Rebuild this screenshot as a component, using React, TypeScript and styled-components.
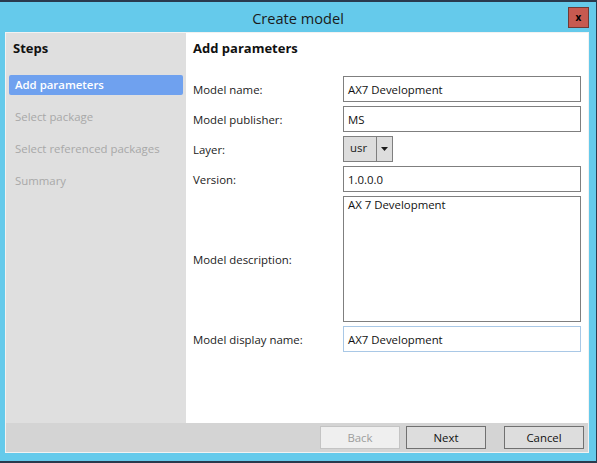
import React from 'react'
import styled, { createGlobalStyle } from 'styled-components'

const GlobalStyle = createGlobalStyle`
  html, body {
    margin: 0;
    padding: 0;
    background: #2a3a4e;
  }
  body {
    font-family: "Open Sans", "Noto Sans", "Liberation Sans", sans-serif;
    font-size: 11.4px;
    color: #1b1b1b;
  }
`

const steps = [
  { label: 'Add parameters', active: true },
  { label: 'Select package', active: false },
  { label: 'Select referenced packages', active: false },
  { label: 'Summary', active: false },
]

const App = () => {
  return (
    <>
      <GlobalStyle />
      <Window>
        <TitleBar>
          <Title>Create model</Title>
          <CloseButton>x</CloseButton>
        </TitleBar>
        <Frame>
          <Body>
            <Sidebar>
              <SideTitle>Steps</SideTitle>
              <StepList>
                {steps.map((s) => (
                  <StepRow key={s.label}>
                    <Step active={s.active}>{s.label}</Step>
                  </StepRow>
                ))}
              </StepList>
            </Sidebar>
            <Main>
              <Heading>Add parameters</Heading>
              <Form>
                <Label>Model name:</Label>
                <TextBox>AX7 Development</TextBox>

                <Label>Model publisher:</Label>
                <TextBox>MS</TextBox>

                <Label>Layer:</Label>
                <Select>
                  <SelectValue>usr</SelectValue>
                  <SelectArrow>
                    <svg width="7" height="4" viewBox="0 0 7 4">
                      <path d="M0 0 H7 L3.5 4 Z" fill="#1b1b1b" />
                    </svg>
                  </SelectArrow>
                </Select>

                <Label>Version:</Label>
                <TextBox>1.0.0.0</TextBox>

                <Label>Model description:</Label>
                <TextArea>AX 7 Development</TextArea>

                <Label>Model display name:</Label>
                <TextBox focused>AX7 Development</TextBox>
              </Form>
            </Main>
          </Body>
          <Footer>
            <Button disabled>Back</Button>
            <Button>Next</Button>
            <Button wide>Cancel</Button>
          </Footer>
        </Frame>
      </Window>
    </>
  )
}

export default App

const Window = styled.div`
  width: 596px;
  height: 459px;
  background: #65caeb;
  border-top: 2px solid #2a3a4e;
  border-right: 1px solid #2a3a4e;
  border-bottom: 2px solid #2a3a4e;
  display: flex;
  flex-direction: column;
`

const TitleBar = styled.div`
  height: 30px;
  position: relative;
  display: flex;
  justify-content: center;
  align-items: center;
`

const Title = styled.div`
  font-size: 14.6px;
  color: #1a1a1a;
  padding-top: 1px;
`

const CloseButton = styled.div`
  position: absolute;
  right: 7px;
  top: 5px;
  width: 21px;
  height: 21px;
  box-sizing: border-box;
  background: #c75a50;
  border: 1px solid #6e3a36;
  display: flex;
  justify-content: center;
  align-items: center;
  font-size: 10px;
  font-weight: 700;
  line-height: 1;
  color: #000;
  padding-bottom: 2px;
`

const Frame = styled.div`
  margin-left: 5px;
  width: 582px;
  height: 419px;
  border: 1px solid #f2f2f2;
  display: flex;
  flex-direction: column;
`

const Body = styled.div`
  flex: 1;
  display: flex;
`

const Sidebar = styled.div`
  width: 180px;
  background: #dfdfdf;
  display: flex;
  flex-direction: column;
`

const SideTitle = styled.div`
  height: 30px;
  padding-left: 7px;
  padding-top: 6px;
  font-size: 13px;
  font-weight: 700;
  color: #111;
`

const StepList = styled.div`
  display: flex;
  flex-direction: column;
`

const StepRow = styled.div`
  height: 32px;
  display: flex;
  align-items: center;
  padding: 0 3px;
`

const Step = styled.div<{ active: boolean }>`
  flex: 1;
  height: 20px;
  line-height: 20px;
  padding-left: 6px;
  border-radius: 2px;
  background: ${(p) => (p.active ? '#6fa1ef' : 'transparent')};
  color: ${(p) => (p.active ? '#ffffff' : '#a8a8a8')};
  font-weight: ${(p) => (p.active ? 600 : 400)};
`

const Main = styled.div`
  flex: 1;
  background: #ffffff;
  padding: 0 7px;
  display: flex;
  flex-direction: column;
`

const Heading = styled.div`
  height: 37px;
  padding-top: 6px;
  font-size: 13px;
  font-weight: 700;
  color: #111;
`

const Form = styled.div`
  display: grid;
  grid-template-columns: 150px 1fr;
  grid-template-rows: 26px 26px 26px 26px 126px 26px;
  row-gap: 4px;
  align-items: center;
`

const Label = styled.div`
  color: #1b1b1b;
`

const TextBox = styled.div<{ focused?: boolean }>`
  height: 26px;
  box-sizing: border-box;
  border: 1px solid ${(p) => (p.focused ? '#a9c8e6' : '#7f7f7f')};
  padding: 0 4px;
  display: flex;
  align-items: center;
  color: #111;
`

const TextArea = styled.div`
  height: 126px;
  box-sizing: border-box;
  border: 1px solid #7f7f7f;
  padding: 0 4px;
  color: #111;
`

const Select = styled.div`
  width: 50px;
  height: 26px;
  box-sizing: border-box;
  border: 1px solid #7f7f7f;
  background: #dddddd;
  display: flex;
`

const SelectValue = styled.div`
  width: 33px;
  box-sizing: border-box;
  padding-left: 6px;
  padding-bottom: 3px;
  display: flex;
  align-items: center;
  border-right: 1px solid #7f7f7f;
`

const SelectArrow = styled.div`
  flex: 1;
  display: flex;
  justify-content: center;
  align-items: center;
`

const Footer = styled.div`
  height: 29px;
  background: #d4d4d4;
  display: flex;
  justify-content: flex-end;
  align-items: center;
  gap: 6px;
  padding-right: 4px;
`

const Button = styled.div<{ disabled?: boolean; wide?: boolean }>`
  width: 80px;
  height: 23px;
  box-sizing: border-box;
  margin-left: ${(p) => (p.wide ? '12px' : '0')};
  border: 1px solid ${(p) => (p.disabled ? '#c4c4c4' : '#707070')};
  background: ${(p) => (p.disabled ? '#efefef' : '#dddddd')};
  color: ${(p) => (p.disabled ? '#9d9d9d' : '#111')};
  display: flex;
  justify-content: center;
  align-items: center;
`
